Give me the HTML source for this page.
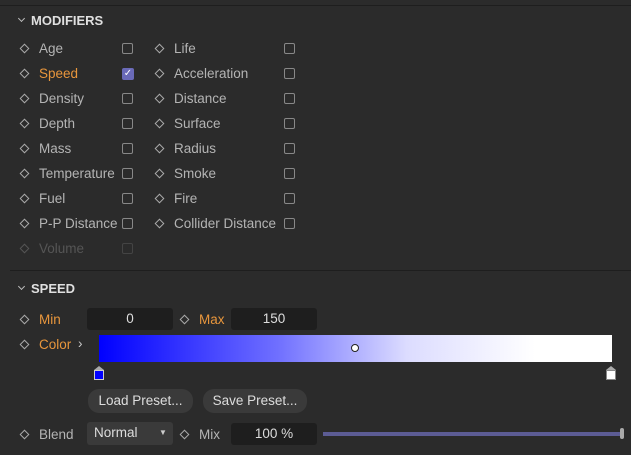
<!DOCTYPE html><html><head><style>
body{margin:0;width:631px;height:455px;background:#2b2b2b;font-family:"Liberation Sans",sans-serif;font-size:13.5px;color:#b4b4b4;position:relative;overflow:hidden}
.a{position:absolute}
.d{position:absolute;width:5px;height:5px;border:1.3px solid #aaa;transform:rotate(45deg)}
.cb{position:absolute;width:9px;height:9px;border:1.3px solid #888;border-radius:2px}
.h{position:absolute;font-weight:bold;color:#e0e0e0;font-size:13px}
.in{position:absolute;background:#1e1e1e;border-radius:3px;height:22px;line-height:22px;text-align:center;color:#ddd}
.btn{position:absolute;background:#3a3a3a;border-radius:11px;height:24px;line-height:24px;text-align:center;color:#ddd}
.o{color:#e8963c}
.ch{position:absolute;width:4px;height:4px;border-right:1.2px solid #bbb;border-bottom:1.2px solid #bbb;transform:rotate(45deg)}
</style></head><body>
<div class="a" style="left:0;top:5px;width:631px;height:1px;background:#1e1e1e"></div>
<div class="ch" style="left:19px;top:16px"></div>
<div class="h" style="left:31px;top:13px">MODIFIERS</div>
<div id="rows"></div>
<div class="a" style="left:10px;top:270px;width:621px;height:1px;background:#1e1e1e"></div>
<div class="ch" style="left:19px;top:284px"></div>
<div class="h" style="left:31px;top:281px">SPEED</div>
<div class="d" style="left:21px;top:316px"></div><div class="a o" style="left:39px;top:312px">Min</div>
<div class="in" style="left:87px;top:308px;width:86px">0</div>
<div class="d" style="left:181px;top:316px"></div><div class="a o" style="left:199px;top:312px">Max</div>
<div class="in" style="left:231px;top:308px;width:86px">150</div>
<div class="d" style="left:21px;top:341px"></div><div class="a o" style="left:39px;top:337px">Color</div>
<div class="a" style="left:78px;top:336px;color:#ccc">›</div>
<div class="a" style="left:99px;top:335px;width:513px;height:27px;background:linear-gradient(90deg,#0000ff 0%,#7070ff 35%,#dcdcff 60%,#fff 85%)"></div>
<div class="a" style="left:351px;top:344px;width:6px;height:6px;border:1.3px solid #222;border-radius:50%;background:#fff"></div>
<div class="a" style="left:94px;top:366px;width:0;height:0;border-left:5px solid transparent;border-right:5px solid transparent;border-bottom:4px solid #aaa"></div>
<div class="a" style="left:94px;top:370px;width:8px;height:8px;background:#00f;border:1px solid #ccc"></div>
<div class="a" style="left:606px;top:366px;width:0;height:0;border-left:5px solid transparent;border-right:5px solid transparent;border-bottom:4px solid #aaa"></div>
<div class="a" style="left:606px;top:370px;width:8px;height:8px;background:#fff;border:1px solid #888"></div>
<div class="btn" style="left:88px;top:389px;width:105px">Load Preset...</div>
<div class="btn" style="left:203px;top:389px;width:104px">Save Preset...</div>
<div class="d" style="left:21px;top:431px"></div><div class="a" style="left:39px;top:427px">Blend</div>
<div class="a" style="left:87px;top:422px;width:86px;height:23px;background:#3a3a3a;border-radius:3px"></div>
<div class="a" style="left:94px;top:425px;color:#ddd">Normal</div>
<div class="a" style="left:159px;top:428px;color:#ccc;font-size:8px">▼</div>
<div class="d" style="left:181px;top:431px"></div><div class="a" style="left:199px;top:427px">Mix</div>
<div class="in" style="left:231px;top:423px;width:86px">100 %</div>
<div class="a" style="left:323px;top:432px;width:298px;height:4px;background:#5c5c94"></div>
<div class="a" style="left:620px;top:428px;width:4px;height:11px;background:#aaa;border-radius:2px"></div>
<script>
var L=[["Age","Life"],["Speed","Acceleration"],["Density","Distance"],["Depth","Surface"],["Mass","Radius"],["Temperature","Smoke"],["Fuel","Fire"],["P-P Distance","Collider Distance"],["Volume",null]];
var h="";L.forEach(function(r,i){var y=49+25*i;var dim=r[0]=="Volume";var cl=r[0]=="Speed"?"o":"";
h+='<div class="d" style="left:21px;top:'+(y-4)+'px;'+(dim?'border-color:#555':'')+'"></div><div class="a '+cl+'" style="left:39px;top:'+(y-8)+'px;'+(dim?'color:#555':'')+'">'+r[0]+'</div>';
if(r[0]=="Speed")h+='<div class="a" style="left:122px;top:'+(y-6)+'px;width:12px;height:12px;background:#6a6ab8;border-radius:2px;color:#fff;font-size:10px;line-height:12px;text-align:center">✓</div>';
else h+='<div class="cb" style="left:122px;top:'+(y-6)+'px;'+(dim?'border-color:#444':'')+'"></div>';
if(r[1]){h+='<div class="d" style="left:156px;top:'+(y-4)+'px"></div><div class="a" style="left:174px;top:'+(y-8)+'px">'+r[1]+'</div><div class="cb" style="left:284px;top:'+(y-6)+'px"></div>';}
});document.getElementById("rows").innerHTML=h;
</script>
</body></html>
